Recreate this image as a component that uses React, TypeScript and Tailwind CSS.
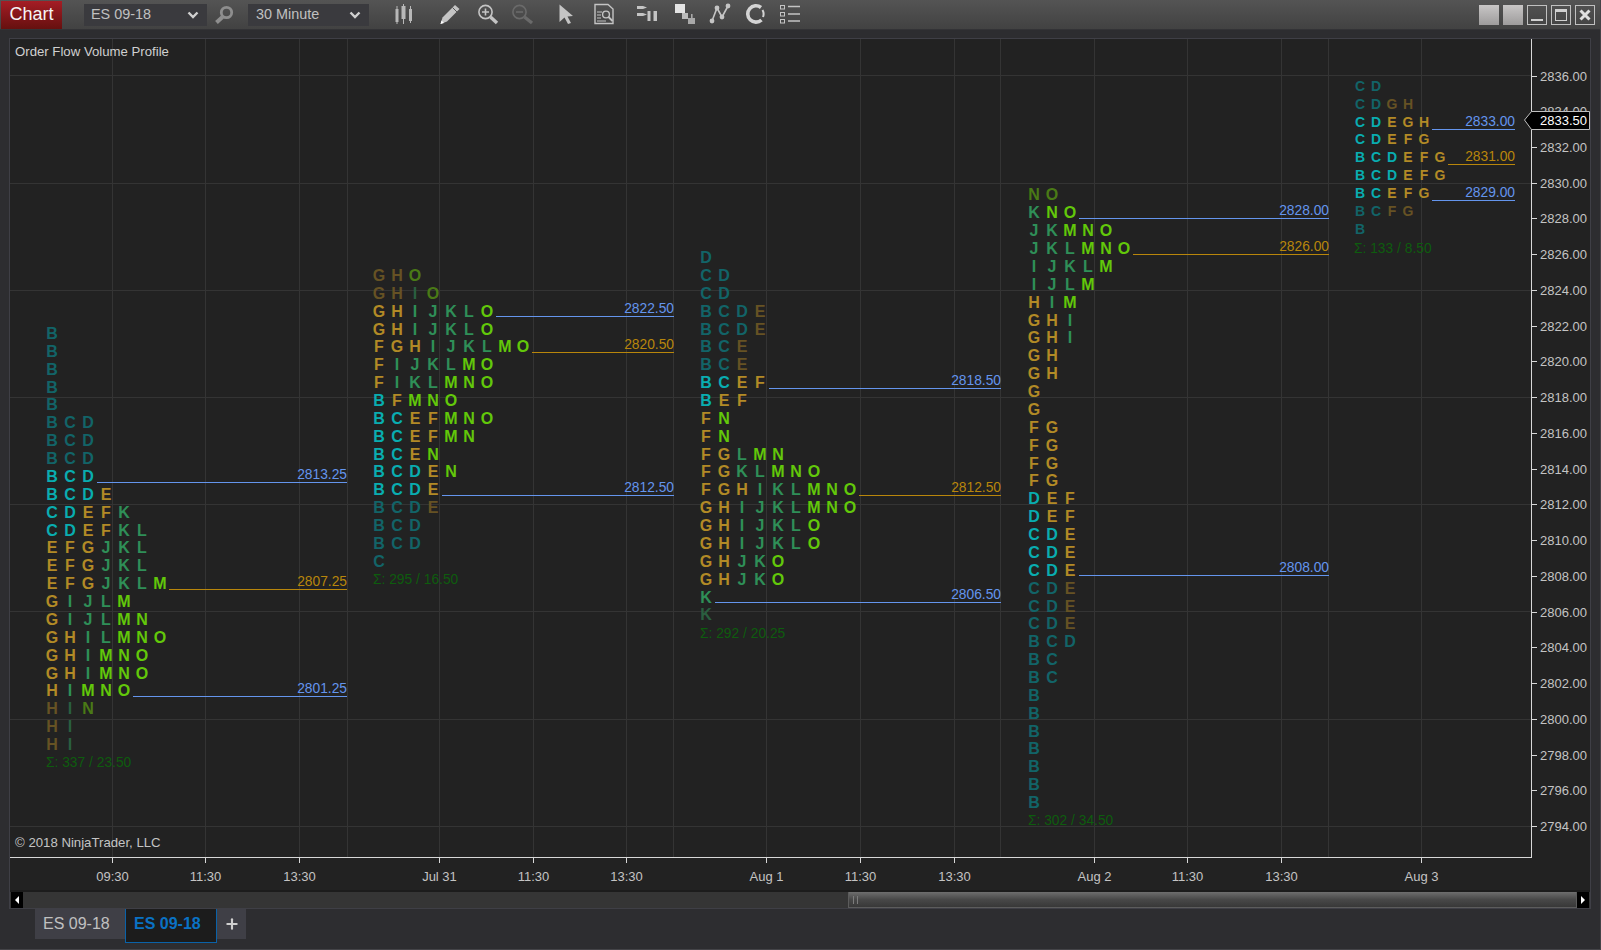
import { Plus } from "lucide-react";

type Line = { price: number; label: string; poc?: boolean };
type Profile = {
  x: number;
  top: number;
  rows: string[];
  hi: number; // value area top price
  lo: number; // value area bottom price
  end: number;
  lines: Line[];
  sigma: string;
  sigmaY: number;
  small?: boolean; // last session is drawn tighter
};

const profiles: Profile[] = [
  {
    x: 52,
    top: 2821.25,
    hi: 2813.25,
    lo: 2801.25,
    end: 347,
    sigma: "Σ: 337 / 23.50",
    sigmaY: 762,
    lines: [
      { price: 2813.25, label: "2813.25" },
      { price: 2807.25, label: "2807.25", poc: true },
      { price: 2801.25, label: "2801.25" },
    ],
    rows: ["B", "B", "B", "B", "B", "BCD", "BCD", "BCD", "BCD", "BCDE", "CDEFK", "CDEFKL", "EFGJKL", "EFGJKL", "EFGJKLM", "GIJLM", "GIJLMN", "GHILMNO", "GHIMNO", "GHIMNO", "HIMNO", "HIN", "HI", "HI"],
  },
  {
    x: 379,
    top: 2824.5,
    hi: 2822.5,
    lo: 2812.5,
    end: 674,
    sigma: "Σ: 295 / 16.50",
    sigmaY: 579,
    lines: [
      { price: 2822.5, label: "2822.50" },
      { price: 2820.5, label: "2820.50", poc: true },
      { price: 2812.5, label: "2812.50" },
    ],
    rows: ["GHO", "GHIO", "GHIJKLO", "GHIJKLO", "FGHIJKLMO", "FIJKLMO", "FIKLMNO", "BFMNO", "BCEFMNO", "BCEFMN", "BCEN", "BCDEN", "BCDE", "BCDE", "BCD", "BCD", "C"],
  },
  {
    x: 706,
    top: 2825.5,
    hi: 2818.5,
    lo: 2806.5,
    end: 1001,
    sigma: "Σ: 292 / 20.25",
    sigmaY: 633,
    lines: [
      { price: 2818.5, label: "2818.50" },
      { price: 2812.5, label: "2812.50", poc: true },
      { price: 2806.5, label: "2806.50" },
    ],
    rows: ["D", "CD", "CD", "BCDE", "BCDE", "BCE", "BCE", "BCEF", "BEF", "FN", "FN", "FGLMN", "FGKLMNO", "FGHIKLMNO", "GHIJKLMNO", "GHIJKLO", "GHIJKLO", "GHJKO", "GHJKO", "K", "K"],
  },
  {
    x: 1034,
    top: 2829,
    hi: 2828,
    lo: 2808,
    end: 1329,
    sigma: "Σ: 302 / 34.50",
    sigmaY: 820,
    lines: [
      { price: 2828, label: "2828.00" },
      { price: 2826, label: "2826.00", poc: true },
      { price: 2808, label: "2808.00" },
    ],
    rows: ["NO", "KNO", "JKMNO", "JKLMNO", "IJKLM", "IJLM", "HIM", "GHI", "GHI", "GH", "GH", "G", "G", "FG", "FG", "FG", "FG", "DEF", "DEF", "CDE", "CDE", "CDE", "CDE", "CDE", "CDE", "BCD", "BC", "BC", "B", "B", "B", "B", "B", "B", "B"],
  },
  {
    x: 1360,
    top: 2835,
    hi: 2833,
    lo: 2829,
    end: 1515,
    small: true,
    sigma: "Σ: 133 / 8.50",
    sigmaY: 248,
    lines: [
      { price: 2833, label: "2833.00" },
      { price: 2831, label: "2831.00", poc: true },
      { price: 2829, label: "2829.00" },
    ],
    rows: ["CD", "CDGH", "CDEGH", "CDEFG", "BCDEFG", "BCDEFG", "BCEFG", "BCFG", "B"],
  },
];

const priceY = (p: number) => 75.5 + (2836 - p) * 17.87;

const letterClass = (l: string, bright: boolean) => {
  if ("BCD".includes(l)) return bright ? "fill-[#09adb0]" : "fill-[#126468]";
  if ("EFGH".includes(l)) return bright ? "fill-[#b28a26]" : "fill-[#665224]";
  if ("IJKL".includes(l)) return bright ? "fill-[#2f8f58]" : "fill-[#2a5e40]";
  return bright ? "fill-[#62c80a]" : "fill-[#4a7a16]";
};

const hGrid = [75, 183, 290, 397, 504, 611, 719, 826];
const vGrid = [112, 205, 299, 347, 439, 533, 626, 673, 766, 860, 954, 1000, 1094, 1187, 1281, 1328, 1421];
const timeLabels: [number, string][] = [
  [112, "09:30"], [205, "11:30"], [299, "13:30"],
  [439, "Jul 31"], [533, "11:30"], [626, "13:30"],
  [766, "Aug 1"], [860, "11:30"], [954, "13:30"],
  [1094, "Aug 2"], [1187, "11:30"], [1281, "13:30"],
  [1421, "Aug 3"],
];
const axisPrices = Array.from({ length: 22 }, (_, i) => 2794 + i * 2);

function ProfileBlock({ p }: { p: Profile }) {
  const step = p.small ? 16 : 18;
  return (
    <g>
      {p.rows.map((row, r) => {
        const price = p.top - r;
        const bright = price <= p.hi && price >= p.lo;
        const y = Math.round(priceY(price) - (p.small ? 2.5 : 0.1));
        return row.split("").map((l, i) => (
          <text
            key={r + "-" + i}
            x={p.x + i * step}
            y={y}
            textAnchor="middle"
            className={(p.small ? "text-[14px] font-bold " : "text-[16px] font-bold ") + letterClass(l, bright)}
          >
            {l}
          </text>
        ));
      })}
      {p.lines.map((ln) => {
        const y = Math.round(priceY(ln.price) - 0.5) + 0.5;
        const row = p.rows[Math.round(p.top - ln.price)];
        return (
          <g key={ln.label}>
            <line x1={p.x + row.length * step - step / 2} x2={p.end} y1={y} y2={y} stroke={ln.poc ? "#b8860b" : "#6495ed"} />
            <text x={p.end} y={y - 4} textAnchor="end" className={"text-[13.8px] " + (ln.poc ? "fill-[#b8860b]" : "fill-[#6495ed]")}>
              {ln.label}
            </text>
          </g>
        );
      })}
      <text x={p.x - 6} y={p.sigmaY + 5} className="text-[13.8px] fill-[#0e5c0e]">
        {p.sigma}
      </text>
    </g>
  );
}

function ChartArea() {
  return (
    <svg width={1580} height={851} className="block bg-[#222222]">
      <g transform="translate(-10,-39)">
        {hGrid.map((y) => (
          <line key={y} x1={10} x2={1531} y1={y + 0.5} y2={y + 0.5} stroke="#343434" />
        ))}
        {vGrid.map((x) => (
          <line key={x} x1={x + 0.5} x2={x + 0.5} y1={39} y2={857} stroke="#343434" />
        ))}
        <text x={15} y={56} className="text-[13.2px] fill-[#d0d0d0]">Order Flow Volume Profile</text>
        <text x={15} y={847} className="text-[13.2px] fill-[#c4c4c4]">© 2018 NinjaTrader, LLC</text>

        {profiles.map((p) => (
          <ProfileBlock key={p.x} p={p} />
        ))}

        {/* axes */}
        <line x1={1531.5} x2={1531.5} y1={39} y2={857} stroke="#d8d8d8" />
        <line x1={10} x2={1532} y1={857.5} y2={857.5} stroke="#d8d8d8" />
        {axisPrices.map((pr) => {
          const y = Math.round(priceY(pr));
          return (
            <g key={pr}>
              <line x1={1532} x2={1537} y1={y + 0.5} y2={y + 0.5} stroke="#d8d8d8" />
              <text x={1540} y={y + 5} className="text-[13px] fill-[#c4c4c4]">{pr}.00</text>
            </g>
          );
        })}
        {timeLabels.map(([x, t]) => (
          <g key={x + t}>
            <line x1={x + 0.5} x2={x + 0.5} y1={858} y2={863} stroke="#d8d8d8" />
            <text x={x + 0.5} y={881} textAnchor="middle" className="text-[13px] fill-[#c4c4c4]">{t}</text>
          </g>
        ))}

        {/* current price tag */}
        <polygon points="1524.5,120 1531.5,111.5 1589.5,111.5 1589.5,129.5 1531.5,129.5" fill="#000000" stroke="#c0c0c0" />
        <text x={1540} y={125} className="text-[13px] font-medium fill-[#ffffff]">2833.50</text>
      </g>
    </svg>
  );
}

const Chevron = () => (
  <svg width={12} height={8} viewBox="0 0 12 8" className="shrink-0">
    <path d="M1.5 1.5 L6 6 L10.5 1.5" fill="none" stroke="#d0d0d0" strokeWidth={2.4} />
  </svg>
);

// toolbar icons are drawn in page coordinates, so the viewBox carries the x offset
function ToolIcon({ x, w, children }: { x: number; w: number; children: React.ReactNode }) {
  return (
    <svg width={w} height={30} viewBox={`${x} 0 ${w} 30`} className="shrink-0">
      {children}
    </svg>
  );
}

function Toolbar() {
  return (
    <div className="flex h-[30px] items-center border-b border-[#333336] bg-gradient-to-b from-[#545454] to-[#424242]">
      <div className="ml-[1px] flex h-[28px] w-[61px] items-center justify-center bg-gradient-to-b from-[#a51d25] to-[#66100f] text-[18px] text-[#f5f5f5]">
        Chart
      </div>
      <div className="ml-[22px] flex h-[22px] w-[123px] items-center justify-between bg-[#3a3a3e] pl-[7px] pr-[8px] text-[14.4px] text-[#c0c0c0]">
        ES 09-18
        <Chevron />
      </div>
      <ToolIcon x={207} w={41}>
        <circle cx={226.5} cy={12.5} r={5.2} fill="none" stroke="#8e8e8e" strokeWidth={2.8} />
        <path d="M222.5 17 L216.5 22.5" stroke="#8e8e8e" strokeWidth={4} />
      </ToolIcon>
      <div className="flex h-[22px] w-[121px] items-center justify-between bg-[#3a3a3e] pl-[8px] pr-[8px] text-[14.4px] text-[#c0c0c0]">
        30 Minute
        <Chevron />
      </div>
      <ToolIcon x={369} w={66}>
        <g fill="#b8b8b8">
          <rect x={395.5} y={9} width={3} height={13} />
          <rect x={396.5} y={6} width={1} height={18} />
          <rect x={401.5} y={6} width={4} height={13} />
          <rect x={403} y={4} width={1} height={20} />
          <rect x={409} y={9} width={3} height={12} />
          <rect x={410} y={6} width={1} height={17} />
        </g>
      </ToolIcon>
      <ToolIcon x={435} w={30}>
        <path d="M440.5 24 L442.5 17.5 L455 5 L459.5 9 L447 21.5 Z" fill="#c4c4c4" />
        <path d="M452.5 7.5 L457 12" stroke="#555555" strokeWidth={1} />
        <path d="M440.5 24 L441.5 20.5 L444 23 Z" fill="#ffffff" />
      </ToolIcon>
      <ToolIcon x={465} w={42}>
        <circle cx={485.5} cy={12} r={6.6} fill="none" stroke="#c4c4c4" strokeWidth={1.6} />
        <path d="M482 12 H489 M485.5 8.5 V15.5" stroke="#c4c4c4" strokeWidth={1.6} />
        <path d="M490.5 17 L497 23" stroke="#c4c4c4" strokeWidth={3.4} />
      </ToolIcon>
      <ToolIcon x={507} w={43}>
        <circle cx={519.5} cy={12} r={6.6} fill="none" stroke="#6a6a6a" strokeWidth={1.6} />
        <path d="M516 12 H523" stroke="#6a6a6a" strokeWidth={1.6} />
        <path d="M524.5 17 L532 23" stroke="#6a6a6a" strokeWidth={3.4} />
      </ToolIcon>
      <ToolIcon x={550} w={40}>
        <path d="M559.5 4.5 L573 16 L567.5 16.5 L571 23 L568 24 L564.5 17.5 L559.5 22 Z" fill="#c4c4c4" />
      </ToolIcon>
      <ToolIcon x={590} w={30}>
        <path d="M595 4.5 H608 L613 9 V23.5 H595 Z" fill="none" stroke="#c4c4c4" strokeWidth={1.4} />
        <path d="M597 12 H602 M597 15 H601 M597 18 H601 M597 21 H606" stroke="#c4c4c4" strokeWidth={1} />
        <circle cx={606} cy={14.5} r={3.4} fill="none" stroke="#c4c4c4" strokeWidth={1.4} />
        <path d="M608.5 17 L612.5 21" stroke="#c4c4c4" strokeWidth={1.8} />
      </ToolIcon>
      <ToolIcon x={620} w={50}>
        <g fill="#c4c4c4">
          <path d="M637 6 H643 L647 7.5 L643 9 H637 Z" />
          <path d="M637 13 H643 L647 14.5 L643 16 H637 Z" />
          <rect x={647.5} y={11} width={3} height={10} />
          <rect x={653.5} y={11} width={3.5} height={10} />
        </g>
      </ToolIcon>
      <ToolIcon x={670} w={35}>
        <rect x={675} y={4} width={10} height={9} fill="#e4e4e4" />
        <rect x={682} y={13} width={6} height={6} fill="#bcbcbc" />
        <rect x={688} y={18} width={7} height={6} fill="#a8a8a8" />
        <rect x={691} y={14} width={1.6} height={4} fill="#a8a8a8" />
      </ToolIcon>
      <ToolIcon x={705} w={35}>
        <path d="M712 21 L717 8 L722 17 L728 6" fill="none" stroke="#c4c4c4" strokeWidth={1.6} />
        <circle cx={712} cy={21} r={2.4} fill="#c4c4c4" />
        <circle cx={717} cy={8} r={2.4} fill="#c4c4c4" />
        <circle cx={722} cy={17} r={2.4} fill="#c4c4c4" />
        <circle cx={728} cy={6} r={2.4} fill="#c4c4c4" />
      </ToolIcon>
      <ToolIcon x={740} w={32}>
        <path d="M761 7.5 A8.2 8.2 0 1 0 761.5 20" fill="none" stroke="#d4d4d4" strokeWidth={3.6} />
        <path d="M762.5 10 A8 8 0 0 1 763 17" fill="none" stroke="#d4d4d4" strokeWidth={2} />
      </ToolIcon>
      <ToolIcon x={772} w={30}>
        <g fill="none" stroke="#c4c4c4">
          <rect x={780.5} y={5.5} width={4} height={3.5} />
          <rect x={780.5} y={12.5} width={4} height={3.5} />
          <rect x={780.5} y={19.5} width={4} height={3.5} />
        </g>
        <path d="M788 6.5 H800 M788 14 H800 M788 21 H800" stroke="#c4c4c4" strokeWidth={1.6} />
      </ToolIcon>

      <div className="ml-auto mr-[5px] flex items-center gap-[4px]">
        <div className="h-[20px] w-[20px] bg-gradient-to-b from-[#c8c6c6] to-[#9e9c9c]" />
        <div className="h-[20px] w-[20px] bg-gradient-to-b from-[#c8c6c6] to-[#9e9c9c]" />
        <div className="flex h-[20px] w-[20px] items-end justify-center border border-[#c0c0c0] pb-[3px]">
          <div className="h-[2px] w-[12px] bg-[#d0d0d0]" />
        </div>
        <div className="flex h-[20px] w-[20px] items-center justify-center border border-[#c0c0c0]">
          <div className="h-[12px] w-[12px] border border-t-[3px] border-[#d0d0d0]" />
        </div>
        <div className="flex h-[20px] w-[20px] items-center justify-center border border-[#c0c0c0]">
          <svg width={12} height={12} viewBox="0 0 12 12">
            <path d="M1.5 1.5 L10.5 10.5 M10.5 1.5 L1.5 10.5" stroke="#e0e0e0" strokeWidth={3} />
          </svg>
        </div>
      </div>
    </div>
  );
}

function ScrollBar() {
  return (
    <div className="flex h-[18px] border-t-[2px] border-[#1c1c1c] bg-[#353535]">
      <div className="ml-[1px] flex w-[12px] items-center justify-center bg-black">
        <div className="h-0 w-0 border-y-[4px] border-r-[4px] border-y-transparent border-r-white" />
      </div>
      <div className="ml-[825px] flex w-[729px] items-center border border-t-0 border-[#5c5c5c] bg-gradient-to-b from-[#6e6e6e] via-[#484848] to-[#383838] pl-[4px]">
        <div className="h-[8px] w-[5px] border-x border-[#7c7c7c]" />
      </div>
      <div className="flex w-[12px] items-center justify-center bg-black">
        <div className="h-0 w-0 border-y-[4px] border-l-[4px] border-y-transparent border-l-white" />
      </div>
    </div>
  );
}

function Tabs() {
  return (
    <div className="ml-[35px] flex items-start">
      <div className="flex h-[30px] w-[90px] items-center bg-[#3f3f46] pb-[1px] pl-[8px] text-[16px] text-[#c0c0c0]">ES 09-18</div>
      <div className="flex h-[34px] w-[92px] items-center border-x border-b border-[#0a62a8] bg-[#1c1c1c] pb-[4px] pl-[8px] text-[16px] font-bold text-[#0a72c4]">
        ES 09-18
      </div>
      <div className="flex h-[30px] w-[29px] items-center justify-center bg-[#3f3f46] text-[#d0d0d0]">
        <Plus size={16} strokeWidth={3.2} />
      </div>
    </div>
  );
}

export default function App() {
  return (
    <div className="flex h-[950px] w-[1601px] flex-col overflow-hidden border-b border-r border-[#444448] bg-[#2d2d30] font-['Liberation_Sans',Arial,sans-serif]">
      <Toolbar />
      <div className="ml-[9px] mt-[8px] w-[1582px] border border-[#3f3f46]">
        <ChartArea />
        <ScrollBar />
      </div>
      <Tabs />
    </div>
  );
}
